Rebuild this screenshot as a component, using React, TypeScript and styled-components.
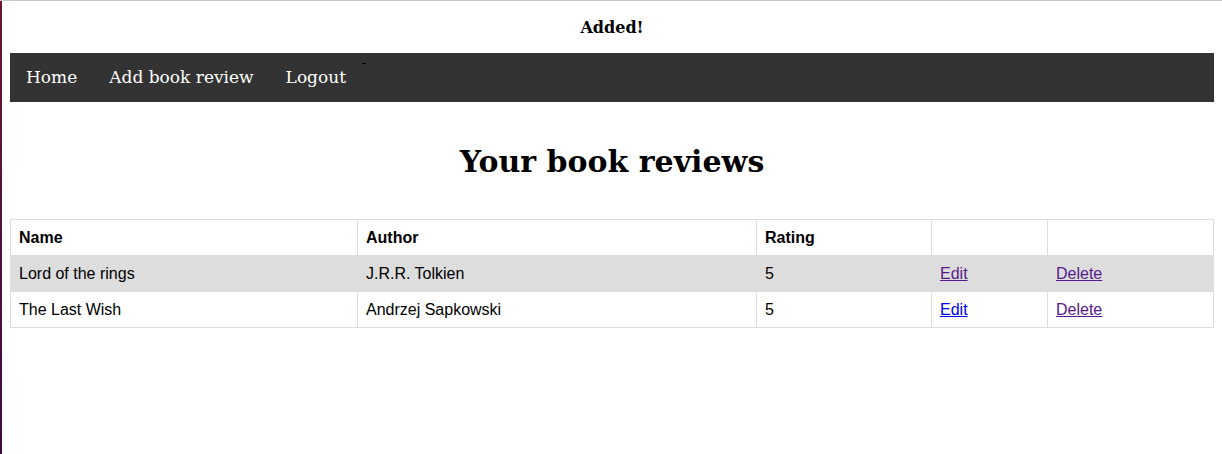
import React from 'react'
import styled, { createGlobalStyle } from 'styled-components'

const GlobalStyle = createGlobalStyle`
  html {
    border-top: 1px solid #c9c9c9;
    border-left: 2px solid #5a1238;
    border-image: linear-gradient(to bottom, #c9c9c9 0 1px, #6e1536 1px, #3b0c42 100%) 1;
    border-right: 0;
    border-bottom: 0;
    min-height: 100%;
    box-sizing: border-box;
  }
  body {
    margin: 8px;
    font-family: "DejaVu Serif", serif;
    background: #ffffff;
    color: #000000;
  }
`

const Flash = styled.p`
  margin: 9px 0 16px;
  text-align: center;
  font-weight: bold;
  font-size: 16px;
`

const NavBar = styled.ul`
  position: relative;
  list-style: none;
  margin: 0;
  padding: 0;
  display: flex;
  background: #333333;
`

const NavItem = styled.li`
  display: block;
`

const NavLink = styled.a`
  display: block;
  color: #ffffff;
  font-size: 17px;
  line-height: 21px;
  padding: 14px 16px;
  text-decoration: none;
`

const Dash = styled.span`
  position: absolute;
  left: 352px;
  top: 10px;
  width: 4px;
  height: 1px;
  background: #000000;
`

const Title = styled.h1`
  margin: 42px 0 40px;
  text-align: center;
  font-size: 30px;
  font-weight: bold;
`

const Table = styled.table`
  width: 100%;
  border-collapse: collapse;
  table-layout: fixed;
  font-family: "Liberation Sans", Arial, sans-serif;
  font-size: 16px;
  line-height: 19px;
`

const Row = styled.tr`
  &:nth-child(even) {
    background: #dddddd;
  }
`

const Head = styled.th`
  border: 1px solid #dddddd;
  padding: 8px;
  text-align: left;
  font-weight: bold;
`

const Cell = styled.td`
  border: 1px solid #dddddd;
  padding: 8px;
  text-align: left;
`

const Action = styled.a<{ $visited?: boolean }>`
  color: ${({ $visited }) => ($visited ? '#551a8b' : '#0000ee')};
  text-decoration: underline;
  cursor: pointer;
`

const reviews = [
  { name: 'Lord of the rings', author: 'J.R.R. Tolkien', rating: 5, editVisited: true },
  { name: 'The Last Wish', author: 'Andrzej Sapkowski', rating: 5, editVisited: false }
]

export default function App() {
  return (
    <>
      <GlobalStyle />
      <Flash>Added!</Flash>
      <NavBar>
        <NavItem>
          <NavLink href="#">Home</NavLink>
        </NavItem>
        <NavItem>
          <NavLink href="#">Add book review</NavLink>
        </NavItem>
        <NavItem>
          <NavLink href="#">Logout</NavLink>
        </NavItem>
        <Dash />
      </NavBar>
      <Title>Your book reviews</Title>
      <Table>
        <colgroup>
          <col style={{ width: 347 }} />
          <col style={{ width: 399 }} />
          <col style={{ width: 175 }} />
          <col style={{ width: 116 }} />
          <col />
        </colgroup>
        <tbody>
          <Row>
            <Head>Name</Head>
            <Head>Author</Head>
            <Head>Rating</Head>
            <Head></Head>
            <Head></Head>
          </Row>
          {reviews.map((r) => (
            <Row key={r.name}>
              <Cell>{r.name}</Cell>
              <Cell>{r.author}</Cell>
              <Cell>{r.rating}</Cell>
              <Cell>
                <Action $visited={r.editVisited}>Edit</Action>
              </Cell>
              <Cell>
                <Action $visited>Delete</Action>
              </Cell>
            </Row>
          ))}
        </tbody>
      </Table>
    </>
  )
}
